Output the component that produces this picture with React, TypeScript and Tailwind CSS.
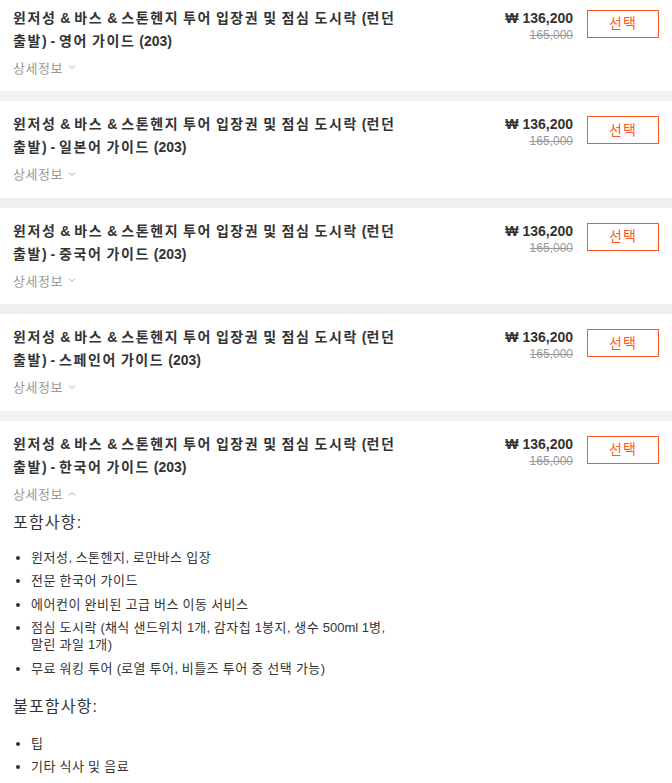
import React from "react";

const FONT = { fontFamily: '"Liberation Sans", "Noto Sans CJK KR", Arial, sans-serif' };

const guides = ["영어", "일본어", "중국어", "스페인어", "한국어"];

// wraps runs of Hangul in a span with extra tracking so the CJK glyph advance matches the reference font
function K({ t, cls }: { t: string; cls: string }) {
  const parts = t.split(/([\uAC00-\uD7A3]+)/);
  return (
    <>
      {parts.map((p, i) =>
        /[\uAC00-\uD7A3]/.test(p) ? (
          <span key={i} className={cls}>
            {p}
          </span>
        ) : (
          <React.Fragment key={i}>{p}</React.Fragment>
        )
      )}
    </>
  );
}

function Chevron({ up }: { up?: boolean }) {
  return (
    <svg width="8" height="5" viewBox="0 0 8 5" className="inline-block ml-[5px] mb-[2px]">
      {up ? (
        <polyline points="1,4.5 4,1.5 7,4.5" fill="none" stroke="#a0a8b8" strokeWidth="1" />
      ) : (
        <polyline points="1,0.5 4,3.5 7,0.5" fill="none" stroke="#a0a8b8" strokeWidth="1" />
      )}
    </svg>
  );
}

const T13 = "tracking-[0.5px]";
const T14B = "tracking-[1.6px]";
const T16 = "tracking-[1.2px]";

function Item({ t }: { t: string }) {
  return (
    <li>
      <K t={t} cls={T13} />
    </li>
  );
}

function Card({ guide, expanded }: { guide: string; expanded?: boolean }) {
  return (
    <div className="bg-white flex pl-[13px] pr-[13px] pt-[12px] pb-[12.5px] break-keep">
      <div className="w-[390px] shrink-0">
        <div className="text-[14px] font-bold leading-[23px] text-[#333]">
          <K t={`윈저성 & 바스 & 스톤헨지 투어 입장권 및 점심 도시락 (런던 출발) - ${guide} 가이드 (203)`} cls={T14B} />
        </div>
        <div className="mt-[6px] text-[13px] leading-[20px] text-[#999] flex items-center">
          <span className={T13}>상세정보</span>
          <Chevron up={expanded} />
        </div>
        {expanded && (
          <div className="text-[#333]">
            <div className="mt-[7px] text-[16px] leading-[22px]">
              <span className={T16}>포함사항</span>:
            </div>
            <ul className="mt-[15px] list-disc pl-[18px] text-[13px] leading-[17px] flex flex-col gap-[6.5px]">
              <Item t="윈저성, 스톤헨지, 로만바스 입장" />
              <Item t="전문 한국어 가이드" />
              <Item t="에어컨이 완비된 고급 버스 이동 서비스" />
              <Item t="점심 도시락 (채식 샌드위치 1개, 감자칩 1봉지, 생수 500ml 1병, 말린 과일 1개)" />
              <Item t="무료 워킹 투어 (로열 투어, 비틀즈 투어 중 선택 가능)" />
            </ul>
            <div className="mt-[19px] text-[16px] leading-[22px]">
              <span className={T16}>불포함사항</span>:
            </div>
            <ul className="mt-[17px] list-disc pl-[18px] text-[13px] leading-[17px] flex flex-col gap-[6.5px]">
              <Item t="팁" />
              <Item t="기타 식사 및 음료" />
            </ul>
          </div>
        )}
      </div>
      <div className="flex-1 flex justify-end items-start">
        <div className="flex flex-col items-end">
          <div className="text-[14px] font-bold leading-[22px] text-[#333]">₩ 136,200</div>
          <div className="text-[12px] leading-[14px] text-[#999] line-through -mt-[1px]">165,000</div>
        </div>
        <button className="ml-[14px] mt-[3px] w-[72px] h-[28px] border border-[#ff5722] text-[#ff5722] text-[14px] bg-white flex items-center justify-center">
          <span className="tracking-[1px]">선택</span>
        </button>
      </div>
    </div>
  );
}

export default function App() {
  return (
    <div className="w-[672px] h-[783px] overflow-hidden bg-[#f0f0f0]" style={FONT}>
      <div className="-mt-[5.5px] flex flex-col gap-[10px]">
        {guides.map((g, i) => (
          <Card key={g} guide={g} expanded={i === 4} />
        ))}
      </div>
    </div>
  );
}
